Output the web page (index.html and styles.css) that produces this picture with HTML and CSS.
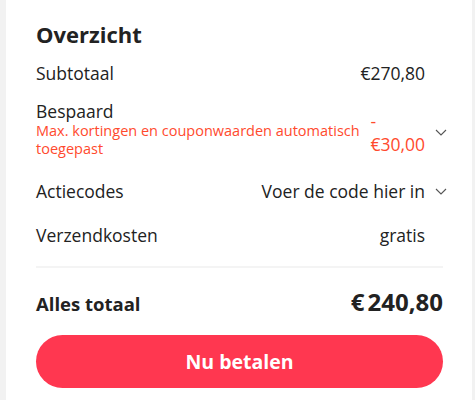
FILE: index.html
```html
<!DOCTYPE html>
<html lang="nl">
   <head>
      <meta charset="UTF-8" />
      <meta name="viewport" content="width=device-width, initial-scale=1.0" />
      <title>Overzicht</title>
      <link rel="stylesheet" href="styles.css">
   </head>
   <body>
      <div class="summary">
         <h2 class="title">Overzicht</h2>
         <div class="row">
            <div class="label">Subtotaal</div>
            <div class="value">€270,80</div>
            <div class="slot"></div>
         </div>
         <div class="row saved">
            <div class="label">
               Bespaard
               <div class="note">Max. kortingen en couponwaarden automatisch toegepast</div>
            </div>
            <div class="value red">-<br />€30,00</div>
            <div class="slot">
               <svg class="chevron" viewBox="0 0 12 7"><path d="M1 1l5 5 5-5" /></svg>
            </div>
         </div>
         <div class="row">
            <div class="label">Actiecodes</div>
            <div class="value">Voer de code hier in</div>
            <div class="slot">
               <svg class="chevron" viewBox="0 0 12 7"><path d="M1 1l5 5 5-5" /></svg>
            </div>
         </div>
         <div class="row">
            <div class="label">Verzendkosten</div>
            <div class="value">gratis</div>
            <div class="slot"></div>
         </div>
         <div class="divider"></div>
         <div class="total">
            <div class="label">Alles totaal</div>
            <div class="value">€<span class="num">240,80</span></div>
         </div>
         <button class="pay">Nu betalen</button>
      </div>
   </body>
</html>
```

FILE: styles.css
```css
body {
   margin: 0;
   padding: 0 3px 0 6px;
   background-color: #f2f2f2;
   font-family: 'Open Sans', sans-serif;
   color: #222;
}

div.summary {
   background-color: #fff;
   height: 400px;
   padding: 19px 29px 0 30px;
   box-sizing: border-box;
}

h2.title {
   margin: 0 0 2px;
   font-size: 22px;
   font-weight: bold;
   line-height: 30px;
}

div.row {
   display: flex;
   align-items: center;
   margin-right: -4px;
   padding: 10px 0;
   font-size: 17.5px;
   line-height: 24px;
}

div.row .label {
   flex: 1;
}

div.row .value {
   text-align: right;
}

div.row .red {
   color: #ff4a2e;
}

div.slot {
   width: 22px;
   display: flex;
   justify-content: flex-end;
}

svg.chevron {
   width: 12px;
   height: 7px;
   fill: none;
   stroke: #555;
   stroke-width: 1.1;
}

div.saved {
   align-items: flex-start;
   padding: 5px 0 11px;
}

div.saved .label {
   line-height: 22px;
}

div.note {
   font-size: 14.5px;
   line-height: 18px;
   color: #ff4a2e;
}

div.saved .value {
   padding: 10px 0 0 5px;
   line-height: 23px;
   text-align: left;
}

div.saved svg.chevron {
   margin-top: 29px;
}

div.divider {
   height: 2px;
   background-color: #f4f4f4;
   margin: 9px 0 18px;
}

div.total {
   display: flex;
   align-items: baseline;
   justify-content: space-between;
   font-weight: bold;
   line-height: 32px;
   margin-bottom: 15px;
}

div.total .label {
   font-size: 18.5px;
}

div.total .value {
   font-size: 24px;
}

div.total .num {
   margin-left: 3px;
}

button.pay {
   display: block;
   width: 100%;
   height: 53px;
   border: none;
   border-radius: 27px;
   background-color: #ff3750;
   color: #fff;
   font-family: 'Open Sans', sans-serif;
   font-size: 19.5px;
   font-weight: bold;
}
```
